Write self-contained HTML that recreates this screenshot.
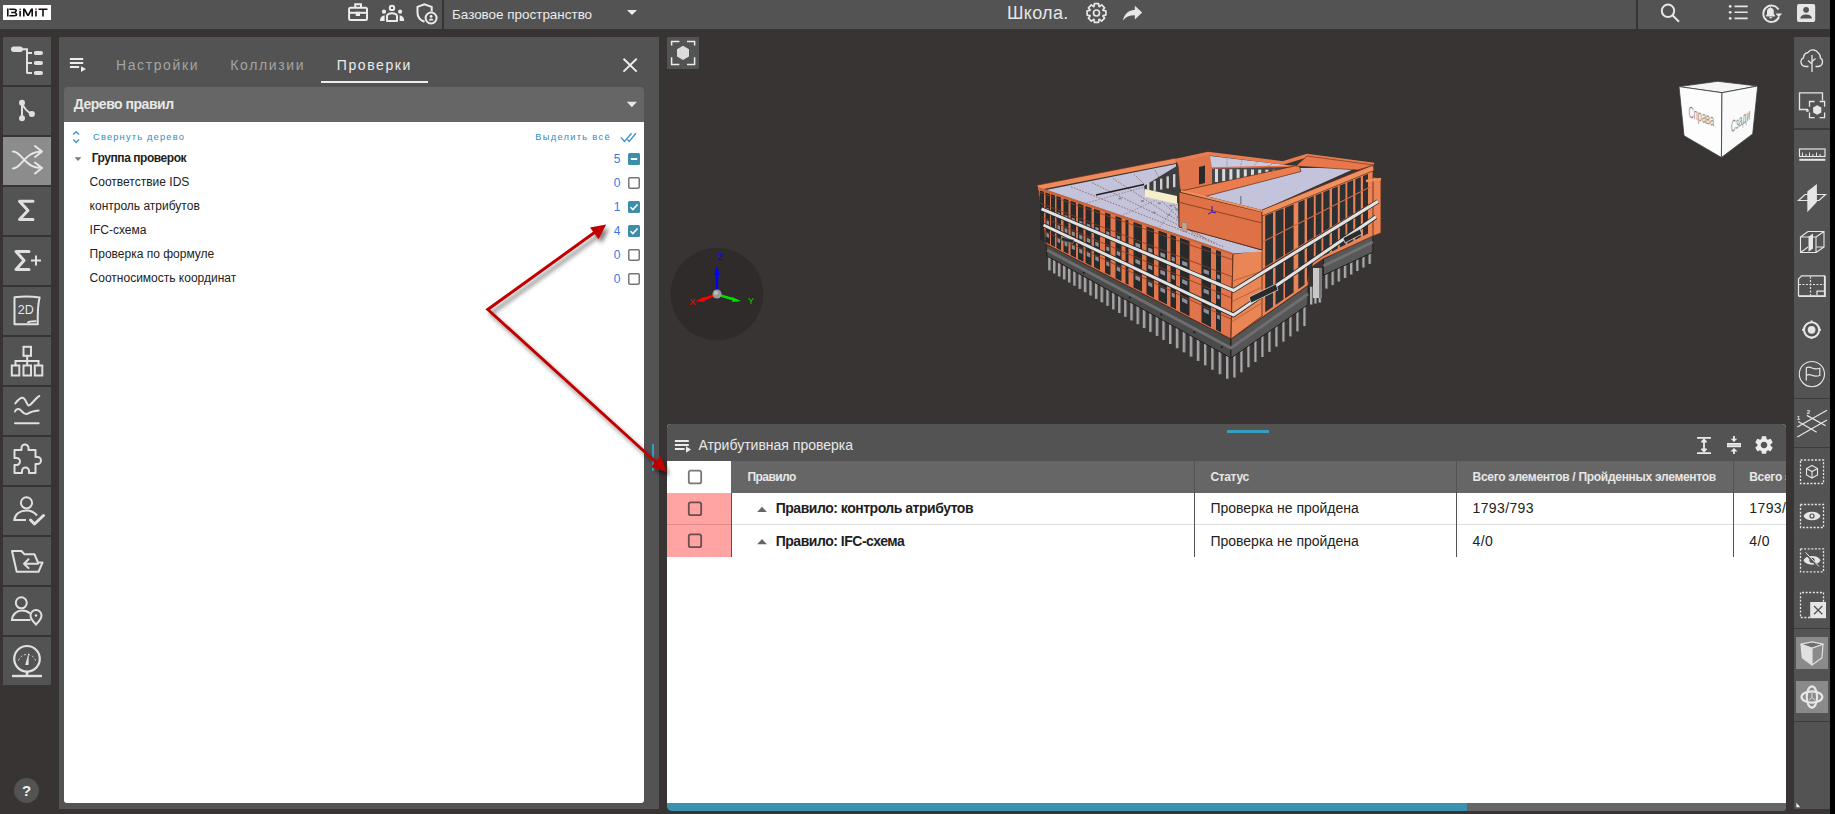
<!DOCTYPE html>
<html><head><meta charset="utf-8">
<style>
*{margin:0;padding:0;box-sizing:border-box}
html,body{width:1835px;height:814px;overflow:hidden;background:#383433;font-family:"Liberation Sans",sans-serif}
.a{position:absolute}
#top{left:0;top:0;width:1830px;height:29px;background:#535353}
#blk{left:1830px;top:0;width:5px;height:814px;background:#000}
.lb{position:absolute;left:3px;width:48px;height:48px;background:#535353}
.lb.on{background:#8c8c8c}
.lb svg{position:absolute;left:0;top:0}
.t{position:absolute;white-space:nowrap;line-height:1}
svg{overflow:visible}
</style></head><body>
<div id="top" class="a"></div>
<div id="blk" class="a"></div>
<!-- logo -->
<div class="a" style="left:3px;top:5px;width:48px;height:15px;background:#fff"></div>
<svg class="a" style="left:3px;top:5px" width="48" height="15" viewBox="0 0 48 15">
<g fill="#111"><rect x="4" y="3.5" width="1.6" height="8"/>
<path d="M6.3 3.5H11Q14 3.5 14 5.6Q14 7.3 12.6 7.5Q14.4 7.8 14.4 9.6Q14.4 11.5 11.2 11.5H6.3V10H11Q12.6 10 12.6 9.4Q12.6 8.3 11 8.3H8.2V6.8H10.8Q12.3 6.8 12.3 5.8Q12.3 5 10.9 5H6.3Z"/>
<rect x="16.3" y="5.8" width="1.6" height="5.7"/>
<path d="M20 11.5V3.5H22L25 9L28 3.5H30V11.5H28.4V6.3L25.8 11H24.2L21.6 6.3V11.5Z"/>
<rect x="32.2" y="5.8" width="1.6" height="5.7"/>
<path d="M35.5 3.5H44.5V5H40.8V11.5H39.2V5H35.5Z"/></g>
<circle cx="17.1" cy="4.3" r="0.8" fill="#111"/><rect x="32.2" y="3.5" width="1.6" height="1.4" fill="#e00"/>
</svg>

<!-- top icons -->
<svg class="a" style="left:340px;top:0" width="100" height="29" viewBox="340 0 100 29">
<g stroke="#ececec" stroke-width="2" fill="none">
<path d="M355.2 7.2V4.3H361V7.2"/><rect x="349.1" y="7.8" width="17.9" height="12.3" rx="1.5"/><path d="M349.1 12.8H367"/>
</g><rect x="355.7" y="11.8" width="4.3" height="4.2" fill="#ececec"/>
<g fill="#ececec"><circle cx="384" cy="11.7" r="2.1"/><circle cx="400.1" cy="11.7" r="2.1"/>
<path d="M380 21Q380 16 384.6 15.2V21Z"/><path d="M404.2 21Q404.2 16 399.6 15.2V21Z"/></g>
<g stroke="#ececec" stroke-width="2" fill="none"><circle cx="392" cy="7.9" r="2.2"/>
<path d="M387 21V16Q387.5 13.2 392 13.2Q396.5 13.2 397 16V21Z" stroke-linejoin="round"/>
<path d="M431.7 11.5V6.9L424.4 4.2L417.5 6.9V13Q417.5 19 424.5 21.8"/><circle cx="431.1" cy="18" r="5.5"/></g>
<circle cx="431.1" cy="16.4" r="1.4" fill="#ececec"/><path d="M428.8 20.6Q429 18.6 431.1 18.6Q433.2 18.6 433.4 20.6Z" fill="#ececec"/>
</svg>
<div class="a" style="left:442px;top:0;width:2px;height:29px;background:#383433"></div>
<div class="t" style="left:452px;top:7.6px;font-size:13.45px;color:#ececec">Базовое пространство</div>
<svg class="a" style="left:626px;top:9px" width="12" height="7" viewBox="0 0 12 7"><path d="M1 1H11L6 6Z" fill="#ececec"/></svg>

<div class="t" style="left:1007px;top:3.8px;font-size:18px;letter-spacing:0.3px;color:#e6e6e6">Школа.</div>
<svg class="a" style="left:1084px;top:1px" width="25" height="25" viewBox="1084 1 25 25">
<path d="M1103.05 10.53 L1105.87 10.90 L1105.87 15.10 L1103.05 15.47 L1102.88 15.89 L1104.61 18.14 L1101.64 21.11 L1099.39 19.38 L1098.97 19.55 L1098.60 22.37 L1094.40 22.37 L1094.03 19.55 L1093.61 19.38 L1091.36 21.11 L1088.39 18.14 L1090.12 15.89 L1089.95 15.47 L1087.13 15.10 L1087.13 10.90 L1089.95 10.53 L1090.12 10.11 L1088.39 7.86 L1091.36 4.89 L1093.61 6.62 L1094.03 6.45 L1094.40 3.63 L1098.60 3.63 L1098.97 6.45 L1099.39 6.62 L1101.64 4.89 L1104.61 7.86 L1102.88 10.11Z" fill="none" stroke="#e6e6e6" stroke-width="1.7" stroke-linejoin="round"/>
<circle cx="1096.5" cy="13" r="3" fill="none" stroke="#e6e6e6" stroke-width="1.7"/>
</svg>
<svg class="a" style="left:1121px;top:2px" width="24" height="22" viewBox="0 0 24 24">
<path fill="#e6e6e6" d="M14 8.5V4l8 7.5-8 7.5v-4.6c-6 0-10.2 1.9-13 5.9 1.2-5.9 4.6-10.9 13-11.8z"/>
</svg>
<div class="a" style="left:1636px;top:0;width:2px;height:29px;background:#383433"></div>
<svg class="a" style="left:1655px;top:0" width="175" height="29" viewBox="1655 0 175 29">
<g stroke="#e6e6e6" stroke-width="2" fill="none"><circle cx="1668" cy="10.8" r="6.2"/><path d="M1672.5 15.3L1679 21.7"/>
<path d="M1734.5 6.4H1747.7M1734.5 12.3H1747.7M1734.5 18.4H1747.7" stroke-width="1.6"/></g>
<g fill="#e6e6e6"><circle cx="1730.2" cy="6.4" r="1.4"/><circle cx="1730.2" cy="12.3" r="1.4"/><circle cx="1730.2" cy="18.4" r="1.4"/></g>
<path d="M1778.5 9.5A8.2 8.2 0 1 0 1779 17" stroke="#e6e6e6" stroke-width="1.9" fill="none"/>
<path d="M1775.5 13.5H1782.2L1778.8 17.3Z" fill="#e6e6e6"/>
<path d="M1766.5 16.5H1775V15.5L1773.8 14V11.2Q1773.8 8.2 1770.8 7.7V7H1770V7.7Q1767 8.2 1767 11.2V14L1766 15.5Z" fill="#e6e6e6"/><rect x="1769.4" y="17" width="2.4" height="1.3" fill="#e6e6e6"/>
<rect x="1797" y="4" width="18.2" height="18" rx="2" fill="#e6e6e6"/>
<circle cx="1806.1" cy="9.8" r="2.9" fill="#535353"/><path d="M1800.2 18.6Q1800.8 14.6 1806.1 14.6Q1811.4 14.6 1812 18.6Z" fill="#535353"/>
</svg>

<div class="lb" style="top:37px"><svg width="48" height="48" viewBox="0 0 48 48"><rect x="8" y="9.5" width="12" height="5.5" rx="2.75" fill="#e0e0e0"/>
<path d="M19 12.2H24V36.5M24 16H29M24 26H29M24 36H29" stroke="#e0e0e0" stroke-width="2" fill="none"/>
<rect x="30.8" y="14" width="9.2" height="4" rx="2" fill="#e0e0e0"/>
<rect x="30.8" y="24" width="9.2" height="4" rx="2" fill="#e0e0e0"/>
<rect x="30.8" y="34" width="9.2" height="4" rx="2" fill="#e0e0e0"/></svg></div>
<div class="lb" style="top:87px"><svg width="48" height="48" viewBox="0 0 48 48"><path d="M19 16V31M19 16Q22 24 28.9 27" stroke="#e0e0e0" stroke-width="2" fill="none"/>
<circle cx="19" cy="15.8" r="3" fill="#e0e0e0"/><circle cx="19" cy="31.3" r="3" fill="#e0e0e0"/><circle cx="28.9" cy="27" r="3" fill="#e0e0e0"/></svg></div>
<div class="lb on" style="top:137px"><svg width="48" height="48" viewBox="0 0 48 48"><path d="M10 14.5C19 14.5 21 31 39 31M10 31.5C19 31.5 21 14.5 39 14.5M32 9L39 14.5L32 20M32 25.5L39 31L32 36.5" stroke="#e6e6e6" stroke-width="2" fill="none" stroke-linecap="round" stroke-linejoin="round"/></svg></div>
<div class="lb" style="top:187px"><svg width="48" height="48" viewBox="0 0 48 48"><path d="M30 14.2H16.5L25 23.5L16.5 32.5H30" stroke="#e0e0e0" stroke-width="3" fill="none" stroke-linecap="round" stroke-linejoin="round"/></svg></div>
<div class="lb" style="top:237px"><svg width="48" height="48" viewBox="0 0 48 48"><path d="M26 14.5H13L21 23.5L13 32.5H26" stroke="#e0e0e0" stroke-width="3" fill="none" stroke-linecap="round" stroke-linejoin="round"/>
<path d="M28 23.5H38M33 18.5V28.5" stroke="#e0e0e0" stroke-width="2" fill="none"/></svg></div>
<div class="lb" style="top:287px"><svg width="48" height="48" viewBox="0 0 48 48"><path d="M11.5 10.2Q24 8.6 36.6 10.4Q34.3 20 34.8 37.2H11.5Z" stroke="#e0e0e0" stroke-width="2" fill="none" stroke-linejoin="round"/>
<path d="M24.5 35.8Q26 34 33.5 34.3" stroke="#e0e0e0" stroke-width="2" fill="none"/>
<text x="22.8" y="26.6" font-family="Liberation Sans" font-size="12.5" fill="#e6e6e6" text-anchor="middle">2D</text></svg></div>
<div class="lb" style="top:337px"><svg width="48" height="48" viewBox="0 0 48 48"><g stroke="#e0e0e0" stroke-width="2" fill="none"><rect x="20.5" y="9.8" width="7.5" height="9"/><path d="M24.2 18.8V28.5M12.5 28.5V24H35.5V28.5"/>
<rect x="8.8" y="28.5" width="7.5" height="10"/><rect x="20.5" y="28.5" width="7.5" height="10"/><rect x="31.8" y="28.5" width="7.5" height="10"/></g></svg></div>
<div class="lb" style="top:387px"><svg width="48" height="48" viewBox="0 0 48 48"><g stroke="#e0e0e0" stroke-width="2" fill="none" stroke-linecap="round"><path d="M12.3 16.4C15 13 17 10.8 19.5 10.8C22.5 10.8 24 18.5 25.6 18.5C28 18.5 33 10.5 36.3 9"/>
<path d="M12 24.5C13 22 15 21.5 17 22.5C19 24 21 28 24 27C27 25 31 23.8 35.6 23.5"/><path d="M12 36.2H35.7"/></g></svg></div>
<div class="lb" style="top:437px"><svg width="48" height="48" viewBox="0 0 48 48"><path d="M11.5 13H18.5V11A3.5 3.5 0 0 1 25.5 11V13H32.5V20H34.5A3.5 3.5 0 0 1 34.5 27H32.5V36H26V34A3.5 3.5 0 0 0 19 34V36H11.5V28H13.5A3.5 3.5 0 0 0 13.5 21H11.5Z" stroke="#e0e0e0" stroke-width="2" fill="none" stroke-linejoin="round"/></svg></div>
<div class="lb" style="top:487px"><svg width="48" height="48" viewBox="0 0 48 48"><g stroke="#e0e0e0" fill="none"><circle cx="23.5" cy="15.8" r="5.6" stroke-width="2"/><path d="M23 33H11.3C12 27 17 23.5 23.5 23.5C28 23.5 31.5 25.5 34 28.5" stroke-width="2"/>
<path d="M27.5 33L31.5 37L40.5 28.5" stroke-width="3" stroke-linecap="round" stroke-linejoin="round"/></g></svg></div>
<div class="lb" style="top:537px"><svg width="48" height="48" viewBox="0 0 48 48"><g stroke="#e0e0e0" stroke-width="2" fill="none" stroke-linejoin="round" stroke-linecap="round"><path d="M9 14H18.5L21.5 17.3H31.5L35 25.5H39.5L35.5 34.8H13.7Z"/><path d="M35 26.7H21.5M25.5 22.3L21 26.7L25.5 31"/></g></svg></div>
<div class="lb" style="top:587px"><svg width="48" height="48" viewBox="0 0 48 48"><g stroke="#e0e0e0" stroke-width="2" fill="none"><circle cx="18.3" cy="15.8" r="5.5"/><path d="M27.5 33H9C9.5 27 14 23.5 19 23.5C22.5 23.5 25 24.5 27 26.5"/>
<path d="M33 37.5C29 33.5 27.5 31 27.5 28.5A5.5 5.5 0 0 1 38.5 28.5C38.5 31 37 33.5 33 37.5Z"/></g><circle cx="33" cy="28.5" r="1.3" fill="#e0e0e0"/></svg></div>
<div class="lb" style="top:637px"><svg width="48" height="48" viewBox="0 0 48 48"><g stroke="#e0e0e0" fill="none"><circle cx="24" cy="21.8" r="12.8" stroke-width="2.2"/><path d="M9 39H39" stroke-width="2.4"/><path d="M24 34.5V39" stroke-width="2.6"/>
<path d="M15.5 23.5A9 9 0 0 1 32.5 23.5" stroke-width="1" stroke-dasharray="2 2"/></g><path d="M22.2 28L25.7 15.2L25.6 28Z" fill="#e0e0e0"/></svg></div>
<!-- left panel -->
<div class="a" style="left:59px;top:37px;width:600px;height:772px;background:#535353"></div>
<svg class="a" style="left:64px;top:50px" width="30" height="30" viewBox="64 50 30 30">
<path d="M69.9 59H83.2M69.9 63H83.2M69.9 67H79.1" stroke="#ececec" stroke-width="2"/><path d="M81 66.2L86 69.1L81 72.1Z" fill="#ececec"/>
</svg>
<div class="t" style="left:116px;top:57.6px;font-size:14px;letter-spacing:1.6px;color:#a3a3a3">Настройки</div>
<div class="t" style="left:230.3px;top:57.6px;font-size:14px;letter-spacing:1.62px;color:#a3a3a3">Коллизии</div>
<div class="t" style="left:336.8px;top:57.6px;font-size:14px;letter-spacing:1.58px;color:#ececec">Проверки</div>
<div class="a" style="left:321px;top:81px;width:107px;height:2px;background:#ececec"></div>
<svg class="a" style="left:620px;top:56px" width="20" height="20" viewBox="620 56 20 20">
<path d="M623.5 58.8L636.7 71.6M636.7 58.8L623.5 71.6" stroke="#ececec" stroke-width="2"/>
</svg>
<div class="a" style="left:64px;top:87px;width:580px;height:35px;background:#666;border-radius:4px 4px 0 0"></div>
<div class="t" style="left:73.8px;top:97.1px;font-size:14px;font-weight:bold;letter-spacing:-0.48px;color:#e8e8e8">Дерево правил</div>
<svg class="a" style="left:626px;top:101px" width="12" height="7" viewBox="0 0 12 7"><path d="M0.7 0.7H11L5.85 6.2Z" fill="#e8e8e8"/></svg>
<div class="a" style="left:64px;top:122px;width:580px;height:681px;background:#fff;border-radius:0 0 3px 3px"></div>
<svg class="a" style="left:70px;top:128px" width="12" height="18" viewBox="70 128 12 18">
<path d="M73.3 134.6L76.2 131.7L79 134.6M73.3 139.6L76.2 142.5L79 139.6" stroke="#3d97c6" stroke-width="1.4" fill="none"/>
</svg>
<div class="t" style="left:93px;top:133.2px;font-size:9.3px;letter-spacing:1.18px;color:#2f8ec0">Свернуть дерево</div>
<div class="t" style="left:535.2px;top:133.3px;font-size:9.3px;letter-spacing:1.3px;color:#2f8ec0">Выделить всё</div>
<svg class="a" style="left:618px;top:130px" width="20" height="15" viewBox="618 130 20 15">
<path d="M621 137.5L624.5 141.5L631.5 133.3M627.5 139.5L629.2 141.5L636 133.3" stroke="#3d97c6" stroke-width="1.4" fill="none"/>
</svg>
<svg class="a" style="left:74px;top:156px" width="8" height="6" viewBox="0 0 8 6"><path d="M0.6 1.2H7.4L4 4.9Z" fill="#777"/></svg>
<div class="t" style="left:91.7px;top:151.8px;font-size:12px;font-weight:bold;letter-spacing:-0.45px;color:#1e1e1e">Группа проверок</div>
<div class="t" style="left:89.6px;top:175.5px;font-size:12px;color:#222">Соответствие IDS</div>
<div class="t" style="left:89.6px;top:199.5px;font-size:12px;color:#222">контроль атрибутов</div>
<div class="t" style="left:89.6px;top:223.5px;font-size:12px;color:#222">IFC-схема</div>
<div class="t" style="left:89.6px;top:247.5px;font-size:12px;color:#222">Проверка по формуле</div>
<div class="t" style="left:89.6px;top:271.5px;font-size:12px;color:#222">Соотносимость координат</div>
<div class="t" style="left:613.8px;top:152.5px;font-size:12px;color:#3b78e7">5</div>
<div class="t" style="left:613.8px;top:176.5px;font-size:12px;color:#3b78e7">0</div>
<div class="t" style="left:613.8px;top:200.5px;font-size:12px;color:#3b78e7">1</div>
<div class="t" style="left:613.8px;top:224.5px;font-size:12px;color:#3b78e7">4</div>
<div class="t" style="left:613.8px;top:248.5px;font-size:12px;color:#3b78e7">0</div>
<div class="t" style="left:613.8px;top:272.5px;font-size:12px;color:#3b78e7">0</div>
<svg class="a" style="left:626px;top:150px" width="16" height="140" viewBox="626 150 16 140">
<rect x="628" y="153" width="12" height="12" rx="1.5" fill="#3d8fa9"/><path d="M630.8 159H637.2" stroke="#fff" stroke-width="2"/>
<rect x="628.75" y="177.75" width="10.5" height="10.5" rx="1.2" fill="#fff" stroke="#767676" stroke-width="1.5"/>
<rect x="628" y="201" width="12" height="12" rx="1.5" fill="#3d8fa9"/><path d="M630.5 207.2L632.9 209.6L637.5 204.5" stroke="#fff" stroke-width="1.6" fill="none"/>
<rect x="628" y="225" width="12" height="12" rx="1.5" fill="#3d8fa9"/><path d="M630.5 231.2L632.9 233.6L637.5 228.5" stroke="#fff" stroke-width="1.6" fill="none"/>
<rect x="628.75" y="249.75" width="10.5" height="10.5" rx="1.2" fill="#fff" stroke="#767676" stroke-width="1.5"/>
<rect x="628.75" y="273.75" width="10.5" height="10.5" rx="1.2" fill="#fff" stroke="#767676" stroke-width="1.5"/>
</svg>

<!-- viewer button -->
<div class="a" style="left:667px;top:37px;width:32px;height:32px;background:#535353"></div>
<svg class="a" style="left:667px;top:37px" width="32" height="32" viewBox="667 37 32 32">
<path d="M671.6 45.6V41.6H679.4M687 41.6H694.6V45.6M694.6 57.2V64.6H687M679.4 64.6H671.6V57.2" stroke="#ececec" stroke-width="1.5" fill="none"/>
<path d="M683 45.8L689 49.3V56.5L683 60L677 56.5V49.3Z" fill="#dcdcdc"/>
</svg>
<!-- axis gizmo -->
<svg class="a" style="left:667px;top:244px" width="100" height="100" viewBox="667 244 100 100">
<circle cx="717" cy="294" r="46.3" fill="#2f2b2a"/>
<path d="M717 292V272" stroke="#0000ff" stroke-width="2.5"/><path d="M714.3 275L717 265.5L719.7 275Z" fill="#0000ff"/>
<path d="M715 295L702 300" stroke="#ff0000" stroke-width="2.5"/><path d="M703.5 297L695.7 301.3L704.8 302Z" fill="#ff0000"/>
<path d="M719 295L734 299.5" stroke="#00e000" stroke-width="2.5"/><path d="M732 297L741 301L732.5 302Z" fill="#00e000"/>
<circle cx="717" cy="294" r="4.5" fill="#9a9a9a"/><circle cx="716" cy="293" r="2" fill="#bdbdbd"/>
<text x="720" y="260" font-family="Liberation Sans" font-size="9" fill="#0000ff" text-anchor="middle">Z</text>
<text x="692.5" y="305" font-family="Liberation Sans" font-size="9" fill="#ff0000" text-anchor="middle">X</text>
<text x="751" y="304" font-family="Liberation Sans" font-size="9" fill="#00cc00" text-anchor="middle">Y</text>
</svg>
<!-- view cube -->
<svg class="a" style="left:1670px;top:75px" width="100" height="90" viewBox="1670 75 100 90">
<path d="M1679 86.6L1717.7 81.3L1757.7 86L1722 92.7Z" fill="#f4f4f4" stroke="#3a3a3a" stroke-width="0.8"/>
<path d="M1679 86.6L1722 92.7L1721.4 157.5L1684 135.7Z" fill="#fdfdfd" stroke="#3a3a3a" stroke-width="0.8"/>
<path d="M1722 92.7L1757.7 86L1752.7 133.9L1721.4 157.5Z" fill="#fafafa" stroke="#3a3a3a" stroke-width="0.8"/>
<text font-family="Liberation Sans" font-size="9.5" fill="#8a8a8a" transform="translate(1688.5 117) skewY(20) scale(0.78 1.7)">Справа</text>
<text font-family="Liberation Sans" font-size="9.5" fill="#8a8a8a" transform="translate(1731 133) skewY(-36) scale(0.7 1.7)">Сзади</text>
</svg>

<!-- building -->
<svg class="a" style="left:1020px;top:140px" width="380" height="250" viewBox="1020 140 380 250"><rect x="1048.2" y="255.3" width="2.6" height="15.1" fill="#a4a4a4"/>
<rect x="1050.3" y="255.3" width="0.9" height="15.1" fill="#6a6a6a"/>
<rect x="1053.0" y="258.0" width="2.6" height="15.4" fill="#a4a4a4"/>
<rect x="1055.1" y="258.0" width="0.9" height="15.4" fill="#6a6a6a"/>
<rect x="1057.9" y="260.7" width="2.6" height="15.7" fill="#a4a4a4"/>
<rect x="1060.0" y="260.7" width="0.9" height="15.7" fill="#6a6a6a"/>
<rect x="1062.9" y="263.5" width="2.6" height="15.9" fill="#a4a4a4"/>
<rect x="1065.0" y="263.5" width="0.9" height="15.9" fill="#6a6a6a"/>
<rect x="1068.0" y="266.3" width="2.6" height="16.2" fill="#a4a4a4"/>
<rect x="1070.1" y="266.3" width="0.9" height="16.2" fill="#6a6a6a"/>
<rect x="1073.2" y="269.2" width="2.6" height="16.5" fill="#a4a4a4"/>
<rect x="1075.3" y="269.2" width="0.9" height="16.5" fill="#6a6a6a"/>
<rect x="1078.5" y="272.1" width="2.6" height="16.8" fill="#a4a4a4"/>
<rect x="1080.6" y="272.1" width="0.9" height="16.8" fill="#6a6a6a"/>
<rect x="1083.8" y="275.1" width="2.6" height="17.1" fill="#a4a4a4"/>
<rect x="1085.9" y="275.1" width="0.9" height="17.1" fill="#6a6a6a"/>
<rect x="1089.3" y="278.1" width="2.6" height="17.4" fill="#a4a4a4"/>
<rect x="1091.4" y="278.1" width="0.9" height="17.4" fill="#6a6a6a"/>
<rect x="1094.9" y="281.2" width="2.6" height="17.7" fill="#a4a4a4"/>
<rect x="1097.0" y="281.2" width="0.9" height="17.7" fill="#6a6a6a"/>
<rect x="1100.5" y="284.3" width="2.6" height="18.0" fill="#a4a4a4"/>
<rect x="1102.6" y="284.3" width="0.9" height="18.0" fill="#6a6a6a"/>
<rect x="1106.3" y="287.5" width="2.6" height="18.3" fill="#a4a4a4"/>
<rect x="1108.4" y="287.5" width="0.9" height="18.3" fill="#6a6a6a"/>
<rect x="1112.1" y="290.8" width="2.6" height="18.6" fill="#a4a4a4"/>
<rect x="1114.2" y="290.8" width="0.9" height="18.6" fill="#6a6a6a"/>
<rect x="1118.1" y="294.1" width="2.6" height="18.9" fill="#a4a4a4"/>
<rect x="1120.2" y="294.1" width="0.9" height="18.9" fill="#6a6a6a"/>
<rect x="1124.1" y="297.4" width="2.6" height="19.3" fill="#a4a4a4"/>
<rect x="1126.2" y="297.4" width="0.9" height="19.3" fill="#6a6a6a"/>
<rect x="1130.3" y="300.8" width="2.6" height="19.6" fill="#a4a4a4"/>
<rect x="1132.4" y="300.8" width="0.9" height="19.6" fill="#6a6a6a"/>
<rect x="1136.5" y="304.3" width="2.6" height="19.9" fill="#a4a4a4"/>
<rect x="1138.6" y="304.3" width="0.9" height="19.9" fill="#6a6a6a"/>
<rect x="1142.8" y="307.8" width="2.6" height="20.3" fill="#a4a4a4"/>
<rect x="1144.9" y="307.8" width="0.9" height="20.3" fill="#6a6a6a"/>
<rect x="1149.2" y="311.3" width="2.6" height="20.6" fill="#a4a4a4"/>
<rect x="1151.3" y="311.3" width="0.9" height="20.6" fill="#6a6a6a"/>
<rect x="1155.7" y="314.9" width="2.6" height="21.0" fill="#a4a4a4"/>
<rect x="1157.8" y="314.9" width="0.9" height="21.0" fill="#6a6a6a"/>
<rect x="1162.3" y="318.6" width="2.6" height="21.3" fill="#a4a4a4"/>
<rect x="1164.4" y="318.6" width="0.9" height="21.3" fill="#6a6a6a"/>
<rect x="1169.0" y="322.3" width="2.6" height="21.7" fill="#a4a4a4"/>
<rect x="1171.1" y="322.3" width="0.9" height="21.7" fill="#6a6a6a"/>
<rect x="1175.8" y="326.1" width="2.6" height="22.1" fill="#a4a4a4"/>
<rect x="1177.9" y="326.1" width="0.9" height="22.1" fill="#6a6a6a"/>
<rect x="1182.7" y="329.9" width="2.6" height="22.4" fill="#a4a4a4"/>
<rect x="1184.8" y="329.9" width="0.9" height="22.4" fill="#6a6a6a"/>
<rect x="1189.7" y="333.8" width="2.6" height="22.8" fill="#a4a4a4"/>
<rect x="1191.8" y="333.8" width="0.9" height="22.8" fill="#6a6a6a"/>
<rect x="1196.8" y="337.7" width="2.6" height="23.2" fill="#a4a4a4"/>
<rect x="1198.9" y="337.7" width="0.9" height="23.2" fill="#6a6a6a"/>
<rect x="1204.0" y="341.7" width="2.6" height="23.6" fill="#a4a4a4"/>
<rect x="1206.1" y="341.7" width="0.9" height="23.6" fill="#6a6a6a"/>
<rect x="1211.2" y="345.7" width="2.6" height="24.0" fill="#a4a4a4"/>
<rect x="1213.3" y="345.7" width="0.9" height="24.0" fill="#6a6a6a"/>
<rect x="1218.6" y="349.8" width="2.6" height="24.4" fill="#a4a4a4"/>
<rect x="1220.7" y="349.8" width="0.9" height="24.4" fill="#6a6a6a"/>
<rect x="1226.0" y="353.9" width="2.6" height="24.8" fill="#a4a4a4"/>
<rect x="1228.1" y="353.9" width="0.9" height="24.8" fill="#6a6a6a"/>
<rect x="1233.3" y="353.6" width="2.4" height="23.9" fill="#a8a8a8"/>
<rect x="1235.3" y="353.6" width="0.8" height="23.9" fill="#6a6a6a"/>
<rect x="1240.3" y="348.7" width="2.4" height="23.6" fill="#a8a8a8"/>
<rect x="1242.3" y="348.7" width="0.8" height="23.6" fill="#6a6a6a"/>
<rect x="1247.3" y="343.9" width="2.4" height="23.3" fill="#a8a8a8"/>
<rect x="1249.3" y="343.9" width="0.8" height="23.3" fill="#6a6a6a"/>
<rect x="1254.3" y="339.0" width="2.4" height="23.0" fill="#a8a8a8"/>
<rect x="1256.3" y="339.0" width="0.8" height="23.0" fill="#6a6a6a"/>
<rect x="1261.3" y="334.2" width="2.4" height="22.8" fill="#a8a8a8"/>
<rect x="1263.3" y="334.2" width="0.8" height="22.8" fill="#6a6a6a"/>
<rect x="1268.3" y="329.3" width="2.4" height="22.5" fill="#a8a8a8"/>
<rect x="1270.3" y="329.3" width="0.8" height="22.5" fill="#6a6a6a"/>
<rect x="1275.3" y="324.4" width="2.4" height="22.2" fill="#a8a8a8"/>
<rect x="1277.3" y="324.4" width="0.8" height="22.2" fill="#6a6a6a"/>
<rect x="1282.3" y="319.6" width="2.4" height="22.0" fill="#a8a8a8"/>
<rect x="1284.3" y="319.6" width="0.8" height="22.0" fill="#6a6a6a"/>
<rect x="1289.3" y="314.7" width="2.4" height="21.7" fill="#a8a8a8"/>
<rect x="1291.3" y="314.7" width="0.8" height="21.7" fill="#6a6a6a"/>
<rect x="1296.3" y="309.9" width="2.4" height="21.4" fill="#a8a8a8"/>
<rect x="1298.3" y="309.9" width="0.8" height="21.4" fill="#6a6a6a"/>
<rect x="1303.3" y="305.0" width="2.4" height="21.1" fill="#a8a8a8"/>
<rect x="1305.3" y="305.0" width="0.8" height="21.1" fill="#6a6a6a"/>
<rect x="1310.0" y="286.7" width="2.4" height="17.8" fill="#b0b0b0"/>
<rect x="1312.0" y="286.7" width="0.8" height="17.8" fill="#6a6a6a"/>
<rect x="1314.3" y="284.0" width="2.4" height="19.5" fill="#b0b0b0"/>
<rect x="1316.3" y="284.0" width="0.8" height="19.5" fill="#6a6a6a"/>
<rect x="1318.6" y="281.3" width="2.4" height="21.2" fill="#b0b0b0"/>
<rect x="1320.6" y="281.3" width="0.8" height="21.2" fill="#6a6a6a"/>
<rect x="1325.3" y="271.9" width="2.4" height="16.7" fill="#a8a8a8"/>
<rect x="1327.3" y="271.9" width="0.8" height="16.7" fill="#6a6a6a"/>
<rect x="1331.5" y="269.0" width="2.4" height="16.1" fill="#a8a8a8"/>
<rect x="1333.5" y="269.0" width="0.8" height="16.1" fill="#6a6a6a"/>
<rect x="1337.6" y="266.1" width="2.4" height="15.4" fill="#a8a8a8"/>
<rect x="1339.6" y="266.1" width="0.8" height="15.4" fill="#6a6a6a"/>
<rect x="1343.8" y="263.2" width="2.4" height="14.8" fill="#a8a8a8"/>
<rect x="1345.8" y="263.2" width="0.8" height="14.8" fill="#6a6a6a"/>
<rect x="1350.0" y="260.3" width="2.4" height="14.2" fill="#a8a8a8"/>
<rect x="1352.0" y="260.3" width="0.8" height="14.2" fill="#6a6a6a"/>
<rect x="1356.2" y="257.4" width="2.4" height="13.6" fill="#a8a8a8"/>
<rect x="1358.2" y="257.4" width="0.8" height="13.6" fill="#6a6a6a"/>
<rect x="1362.3" y="254.6" width="2.4" height="12.9" fill="#a8a8a8"/>
<rect x="1364.3" y="254.6" width="0.8" height="12.9" fill="#6a6a6a"/>
<rect x="1368.5" y="251.6" width="2.4" height="12.3" fill="#a8a8a8"/>
<rect x="1370.5" y="251.6" width="0.8" height="12.3" fill="#6a6a6a"/>
<rect x="1313" y="268" width="6" height="30" fill="#c8c8c8"/>
<rect x="1319" y="268" width="3" height="30" fill="#7a7a7a"/>
<polygon points="1046.0,244.0 1231.0,339.0 1231.0,358.0 1047.0,256.0" fill="#4a4a4a" stroke="#1e1e1e" stroke-width="1"/>
<polygon points="1231.0,339.0 1308.0,285.5 1308.0,304.6 1231.0,358.0" fill="#565656" stroke="#1e1e1e" stroke-width="1"/>
<polygon points="1323.4,259.2 1372.8,234.0 1372.8,252.2 1323.4,275.4" fill="#585858" stroke="#1e1e1e" stroke-width="1"/>
<polyline points="1047.0,250.0 1231.0,348.0 1308.0,294.0" fill="none" stroke="#6e6e6e" stroke-width="3"/>
<polyline points="1323.4,266.0 1372.8,242.0" fill="none" stroke="#707070" stroke-width="3"/>
<circle cx="1083.8" cy="272.8" r="1" fill="#1a1a1a"/>
<circle cx="1129.8" cy="297.6" r="1" fill="#1a1a1a"/>
<circle cx="1161.1" cy="314.4" r="1" fill="#1a1a1a"/>
<circle cx="1194.2" cy="332.2" r="1" fill="#1a1a1a"/>
<circle cx="1221.8" cy="347.1" r="1" fill="#1a1a1a"/>
<polygon points="1038.0,188.0 1233.0,254.0 1231.0,339.0 1046.0,244.0" fill="#e0744a" stroke="#5a2a18" stroke-width="0.8"/>
<polygon points="1040.0,190.5 1044.0,191.8 1044.0,241.5 1040.0,239.4" fill="#27292b"/>
<polygon points="1045.5,192.3 1050.0,193.9 1050.0,244.6 1045.5,242.2" fill="#27292b"/>
<polygon points="1046.5,207.7 1049.0,208.7 1049.0,212.7 1046.5,211.7" fill="#b8bcc4" opacity="0.7"/>
<polygon points="1046.5,220.2 1049.0,221.3 1049.0,225.3 1046.5,224.2" fill="#b8bcc4" opacity="0.7"/>
<polygon points="1046.5,232.7 1049.0,233.9 1049.0,237.9 1046.5,236.7" fill="#b8bcc4" opacity="0.7"/>
<polygon points="1051.0,194.2 1055.0,195.5 1055.0,247.1 1051.0,245.1" fill="#27292b"/>
<polygon points="1056.5,196.1 1061.0,197.6 1061.0,250.2 1056.5,247.9" fill="#27292b"/>
<polygon points="1057.5,212.0 1060.0,213.0 1060.0,217.0 1057.5,216.0" fill="#b8bcc4" opacity="0.7"/>
<polygon points="1057.5,225.0 1060.0,226.1 1060.0,230.1 1057.5,229.0" fill="#b8bcc4" opacity="0.7"/>
<polygon points="1057.5,238.0 1060.0,239.2 1060.0,243.2 1057.5,242.0" fill="#b8bcc4" opacity="0.7"/>
<polygon points="1063.5,198.4 1068.5,200.1 1068.5,254.1 1063.5,251.5" fill="#27292b"/>
<polygon points="1064.6,214.8 1067.4,215.9 1067.4,219.9 1064.6,218.8" fill="#b8bcc4" opacity="0.7"/>
<polygon points="1064.6,228.1 1067.4,229.3 1067.4,233.3 1064.6,232.1" fill="#b8bcc4" opacity="0.7"/>
<polygon points="1064.6,241.4 1067.4,242.7 1067.4,246.7 1064.6,245.4" fill="#b8bcc4" opacity="0.7"/>
<polygon points="1070.5,200.8 1076.0,202.6 1076.0,257.9 1070.5,255.1" fill="#27292b"/>
<polygon points="1071.7,217.5 1074.8,218.7 1074.8,222.7 1071.7,221.5" fill="#b8bcc4" opacity="0.7"/>
<polygon points="1071.7,231.2 1074.8,232.5 1074.8,236.5 1071.7,235.2" fill="#b8bcc4" opacity="0.7"/>
<polygon points="1071.7,244.8 1074.8,246.3 1074.8,250.3 1071.7,248.8" fill="#b8bcc4" opacity="0.7"/>
<polygon points="1078.0,203.3 1083.5,205.2 1083.5,261.8 1078.0,258.9" fill="#27292b"/>
<polygon points="1079.2,220.5 1082.3,221.7 1082.3,225.7 1079.2,224.5" fill="#b8bcc4" opacity="0.7"/>
<polygon points="1079.2,234.4 1082.3,235.8 1082.3,239.8 1079.2,238.4" fill="#b8bcc4" opacity="0.7"/>
<polygon points="1079.2,248.4 1082.3,249.9 1082.3,253.9 1079.2,252.4" fill="#b8bcc4" opacity="0.7"/>
<polygon points="1085.5,205.9 1091.5,207.9 1091.5,265.9 1085.5,262.8" fill="#27292b"/>
<polygon points="1086.8,223.4 1090.2,224.8 1090.2,228.8 1086.8,227.4" fill="#b8bcc4" opacity="0.7"/>
<polygon points="1086.8,237.7 1090.2,239.2 1090.2,243.2 1086.8,241.7" fill="#b8bcc4" opacity="0.7"/>
<polygon points="1086.8,252.0 1090.2,253.6 1090.2,257.6 1086.8,256.0" fill="#b8bcc4" opacity="0.7"/>
<polygon points="1094.0,208.7 1100.0,210.8 1100.0,270.2 1094.0,267.1" fill="#27292b"/>
<polygon points="1095.3,226.8 1098.7,228.1 1098.7,232.1 1095.3,230.8" fill="#b8bcc4" opacity="0.7"/>
<polygon points="1095.3,241.4 1098.7,242.9 1098.7,246.9 1095.3,245.4" fill="#b8bcc4" opacity="0.7"/>
<polygon points="1095.3,256.1 1098.7,257.7 1098.7,261.7 1095.3,260.1" fill="#b8bcc4" opacity="0.7"/>
<polygon points="1105.0,212.4 1110.5,214.3 1110.5,275.6 1105.0,272.8" fill="#27292b"/>
<polygon points="1106.2,231.0 1109.3,232.2 1109.3,236.2 1106.2,235.0" fill="#b8bcc4" opacity="0.7"/>
<polygon points="1106.2,246.2 1109.3,247.5 1109.3,251.5 1106.2,250.2" fill="#b8bcc4" opacity="0.7"/>
<polygon points="1106.2,261.3 1109.3,262.8 1109.3,266.8 1106.2,265.3" fill="#b8bcc4" opacity="0.7"/>
<polygon points="1115.5,216.0 1121.5,218.0 1121.5,281.3 1115.5,278.2" fill="#27292b"/>
<polygon points="1116.8,235.2 1120.2,236.5 1120.2,240.5 1116.8,239.2" fill="#b8bcc4" opacity="0.7"/>
<polygon points="1116.8,250.8 1120.2,252.2 1120.2,256.2 1116.8,254.8" fill="#b8bcc4" opacity="0.7"/>
<polygon points="1116.8,266.4 1120.2,268.0 1120.2,272.0 1116.8,270.4" fill="#b8bcc4" opacity="0.7"/>
<polygon points="1125.5,219.4 1128.5,220.4 1128.5,284.9 1125.5,283.3" fill="#27292b"/>
<polygon points="1133.5,222.1 1142.0,225.0 1142.0,291.8 1133.5,287.4" fill="#27292b"/>
<polygon points="1135.4,242.4 1140.1,244.3 1140.1,248.3 1135.4,246.4" fill="#b8bcc4" opacity="0.7"/>
<polygon points="1135.4,258.8 1140.1,260.9 1140.1,264.9 1135.4,262.8" fill="#b8bcc4" opacity="0.7"/>
<polygon points="1135.4,275.3 1140.1,277.5 1140.1,281.5 1135.4,279.3" fill="#b8bcc4" opacity="0.7"/>
<polygon points="1146.5,226.5 1154.0,229.0 1154.0,298.0 1146.5,294.1" fill="#27292b"/>
<polygon points="1148.2,247.4 1152.3,249.0 1152.3,253.0 1148.2,251.4" fill="#b8bcc4" opacity="0.7"/>
<polygon points="1148.2,264.4 1152.3,266.2 1152.3,270.2 1148.2,268.4" fill="#b8bcc4" opacity="0.7"/>
<polygon points="1148.2,281.4 1152.3,283.4 1152.3,287.4 1148.2,285.4" fill="#b8bcc4" opacity="0.7"/>
<polygon points="1158.5,230.5 1167.0,233.4 1167.0,304.6 1158.5,300.3" fill="#27292b"/>
<polygon points="1160.4,252.2 1165.1,254.0 1165.1,258.0 1160.4,256.2" fill="#b8bcc4" opacity="0.7"/>
<polygon points="1160.4,269.7 1165.1,271.8 1165.1,275.8 1160.4,273.7" fill="#b8bcc4" opacity="0.7"/>
<polygon points="1160.4,287.2 1165.1,289.5 1165.1,293.5 1160.4,291.2" fill="#b8bcc4" opacity="0.7"/>
<polygon points="1170.5,234.6 1176.0,236.4 1176.0,309.3 1170.5,306.4" fill="#27292b"/>
<polygon points="1171.7,256.6 1174.8,257.8 1174.8,261.8 1171.7,260.6" fill="#b8bcc4" opacity="0.7"/>
<polygon points="1171.7,274.6 1174.8,276.0 1174.8,280.0 1171.7,278.6" fill="#b8bcc4" opacity="0.7"/>
<polygon points="1171.7,292.6 1174.8,294.1 1174.8,298.1 1171.7,296.6" fill="#b8bcc4" opacity="0.7"/>
<polygon points="1180.0,237.8 1189.5,241.0 1189.5,316.2 1180.0,311.3" fill="#27292b"/>
<polygon points="1182.1,260.7 1187.4,262.7 1187.4,266.7 1182.1,264.7" fill="#b8bcc4" opacity="0.7"/>
<polygon points="1182.1,279.1 1187.4,281.4 1187.4,285.4 1182.1,283.1" fill="#b8bcc4" opacity="0.7"/>
<polygon points="1182.1,297.6 1187.4,300.2 1187.4,304.2 1182.1,301.6" fill="#b8bcc4" opacity="0.7"/>
<polygon points="1201.5,245.1 1211.0,248.3 1211.0,327.2 1201.5,322.3" fill="#27292b"/>
<polygon points="1203.6,269.1 1208.9,271.1 1208.9,275.1 1203.6,273.1" fill="#b8bcc4" opacity="0.7"/>
<polygon points="1203.6,288.5 1208.9,290.8 1208.9,294.8 1203.6,292.5" fill="#b8bcc4" opacity="0.7"/>
<polygon points="1203.6,307.9 1208.9,310.4 1208.9,314.4 1203.6,311.9" fill="#b8bcc4" opacity="0.7"/>
<polygon points="1216.0,250.0 1221.0,251.7 1221.0,332.4 1216.0,329.8" fill="#27292b"/>
<polygon points="1217.1,274.3 1219.9,275.4 1219.9,279.4 1217.1,278.3" fill="#b8bcc4" opacity="0.7"/>
<polygon points="1217.1,294.3 1219.9,295.6 1219.9,299.6 1217.1,298.3" fill="#b8bcc4" opacity="0.7"/>
<polygon points="1217.1,314.4 1219.9,315.7 1219.9,319.7 1217.1,318.4" fill="#b8bcc4" opacity="0.7"/>
<line x1="1038.6" y1="191.9" x2="1232.9" y2="259.9" stroke="#8a3e22" stroke-width="0.8"/>
<line x1="1040.2" y1="203.1" x2="1232.5" y2="276.9" stroke="#8a3e22" stroke-width="0.8"/>
<line x1="1042.2" y1="217.1" x2="1232.0" y2="298.2" stroke="#8a3e22" stroke-width="0.8"/>
<line x1="1044.2" y1="231.1" x2="1231.5" y2="319.4" stroke="#8a3e22" stroke-width="0.8"/>
<polygon points="1233.0,254.0 1262.0,250.0 1262.0,210.0 1373.0,165.0 1373.0,177.0 1381.0,179.0 1381.0,233.0 1373.0,236.0 1323.0,259.0 1310.0,268.0 1308.0,285.5 1231.0,339.0" fill="#ea8456" stroke="#5a2a18" stroke-width="0.8"/>
<polygon points="1265.2,215.7 1273.0,212.5 1273.0,306.8 1265.2,312.2" fill="#2c3033"/>
<polygon points="1275.5,211.5 1283.5,208.3 1283.5,299.5 1275.5,305.1" fill="#2c3033"/>
<polygon points="1285.0,207.7 1293.6,204.2 1293.6,292.5 1285.0,298.5" fill="#2c3033"/>
<polygon points="1298.3,202.3 1304.6,199.7 1304.6,284.8 1298.3,289.2" fill="#2c3033"/>
<polygon points="1307.0,198.8 1313.8,196.0 1313.8,260.6 1307.0,283.2" fill="#2c3033"/>
<polygon points="1315.7,195.3 1321.5,192.9 1321.5,256.8 1315.7,259.6" fill="#2c3033"/>
<polygon points="1323.3,192.2 1329.6,189.6 1329.6,252.7 1323.3,255.9" fill="#2c3033"/>
<polygon points="1332.0,188.7 1337.8,186.3 1337.8,248.6 1332.0,251.5" fill="#2c3033"/>
<polygon points="1339.8,185.5 1345.5,183.2 1345.5,244.8 1339.8,247.6" fill="#2c3033"/>
<polygon points="1347.3,182.5 1353.2,180.1 1353.2,240.9 1347.3,243.9" fill="#2c3033"/>
<polygon points="1355.3,179.2 1360.8,177.0 1360.8,237.1 1355.3,239.9" fill="#2c3033"/>
<polygon points="1363.0,176.1 1368.0,174.1 1368.0,233.5 1363.0,236.0" fill="#2c3033"/>
<line x1="1262.0" y1="242.2" x2="1370.0" y2="187.0" stroke="#c86a40" stroke-width="1.1"/>
<line x1="1262.0" y1="269.1" x2="1370.0" y2="204.3" stroke="#c86a40" stroke-width="1.1"/>
<line x1="1262.0" y1="296.0" x2="1370.0" y2="221.7" stroke="#c86a40" stroke-width="1.1"/>
<polygon points="1233.0,254.0 1262.0,250.0 1262.0,316.0 1231.0,339.0" fill="#ea8656" stroke="#5a2a18" stroke-width="0.8"/>
<line x1="1232.4" y1="281.2" x2="1262.0" y2="271.1" stroke="#b05a34" stroke-width="0.8"/>
<line x1="1231.9" y1="301.6" x2="1262.0" y2="287.0" stroke="#b05a34" stroke-width="0.8"/>
<line x1="1231.4" y1="322.0" x2="1262.0" y2="302.8" stroke="#b05a34" stroke-width="0.8"/>
<polyline points="1373.0,177.0 1373.0,236.0" fill="none" stroke="#7a3418" stroke-width="1"/>
<polyline points="1366.0,181.0 1381.0,179.0" fill="none" stroke="#f0905e" stroke-width="2.5"/>
<polygon points="1046.0,190.0 1176.0,164.0 1179.0,227.0 1262.0,250.5 1262.0,251.5 1233.0,253.5" fill="#c3c4db"/>
<polyline points="1038.0,187.5 1176.0,160.5" fill="none" stroke="#f08a5a" stroke-width="5"/>
<polyline points="1038.0,187.5 1176.0,160.5" fill="none" stroke="#5a2a18" stroke-width="0.7" transform="translate(0,-2.5)"/>
<polyline points="1038.0,188.0 1233.0,254.0" fill="none" stroke="#c8643c" stroke-width="2"/>
<line x1="1071.0" y1="186.8" x2="1224.0" y2="247.0" stroke="#8e5a50" stroke-width="0.8" stroke-dasharray="1.6 1.4"/>
<line x1="1092.0" y1="182.7" x2="1215.0" y2="243.0" stroke="#8e5a50" stroke-width="0.8" stroke-dasharray="1.6 1.4"/>
<line x1="1113.0" y1="178.5" x2="1206.0" y2="239.0" stroke="#8e5a50" stroke-width="0.8" stroke-dasharray="1.6 1.4"/>
<line x1="1134.0" y1="174.3" x2="1197.0" y2="235.0" stroke="#8e5a50" stroke-width="0.8" stroke-dasharray="1.6 1.4"/>
<line x1="1155.0" y1="170.2" x2="1188.0" y2="231.0" stroke="#8e5a50" stroke-width="0.8" stroke-dasharray="1.6 1.4"/>
<line x1="1086.6" y1="203.0" x2="1176.6" y2="178.2" stroke="#8e5a50" stroke-width="0.7" stroke-dasharray="1.6 1.4" opacity="0.8"/>
<line x1="1123.2" y1="215.0" x2="1177.2" y2="190.4" stroke="#8e5a50" stroke-width="0.7" stroke-dasharray="1.6 1.4" opacity="0.8"/>
<line x1="1159.8" y1="227.0" x2="1177.8" y2="202.6" stroke="#8e5a50" stroke-width="0.7" stroke-dasharray="1.6 1.4" opacity="0.8"/>
<line x1="1196.4" y1="239.0" x2="1178.4" y2="214.8" stroke="#8e5a50" stroke-width="0.7" stroke-dasharray="1.6 1.4" opacity="0.8"/>
<ellipse cx="1142.4" cy="200.9" rx="1.8" ry="1" fill="#8a8a90"/>
<ellipse cx="1159.3" cy="203.3" rx="1.8" ry="1" fill="#8a8a90"/>
<ellipse cx="1170.9" cy="205.7" rx="1.8" ry="1" fill="#8a8a90"/>
<ellipse cx="1168.8" cy="214.8" rx="1.8" ry="1" fill="#8a8a90"/>
<ellipse cx="1178.1" cy="217.2" rx="1.8" ry="1" fill="#8a8a90"/>
<ellipse cx="1182.0" cy="219.6" rx="1.8" ry="1" fill="#8a8a90"/>
<ellipse cx="1154.1" cy="212.4" rx="1.8" ry="1" fill="#8a8a90"/>
<ellipse cx="1190.7" cy="228.7" rx="1.8" ry="1" fill="#8a8a90"/>
<ellipse cx="1192.4" cy="231.2" rx="1.8" ry="1" fill="#8a8a90"/>
<ellipse cx="1176.6" cy="209.3" rx="1.8" ry="1" fill="#8a8a90"/>
<ellipse cx="1120.0" cy="198.6" rx="1.8" ry="1" fill="#8a8a90"/>
<ellipse cx="1182.3" cy="223.3" rx="1.8" ry="1" fill="#8a8a90"/>
<line x1="1096" y1="195" x2="1144" y2="184.5" stroke="#1e1e1e" stroke-width="1.4"/>
<polygon points="1144.0,186.0 1176.0,166.5 1194.0,170.0 1193.0,188.0 1179.0,193.0 1178.0,203.0 1146.0,197.0" fill="#3e3e40"/>
<rect x="1147.0" y="183.0" width="2.4" height="9.0" fill="#cfcfcf"/>
<rect x="1153.5" y="180.8" width="2.4" height="10.0" fill="#cfcfcf"/>
<rect x="1160.0" y="178.6" width="2.4" height="11.0" fill="#cfcfcf"/>
<rect x="1166.5" y="176.4" width="2.4" height="12.0" fill="#cfcfcf"/>
<rect x="1173.0" y="174.2" width="2.4" height="13.0" fill="#cfcfcf"/>
<rect x="1179.5" y="172.0" width="2.4" height="14.0" fill="#cfcfcf"/>
<rect x="1186.0" y="169.8" width="2.4" height="15.0" fill="#cfcfcf"/>
<polygon points="1145.0,189.0 1177.0,196.0 1177.0,204.0 1145.0,197.0" fill="#f4eecb"/>
<polygon points="1176.0,161.0 1208.0,154.0 1213.0,157.0 1213.0,186.0 1190.0,191.0 1180.0,190.0 1178.0,166.0" fill="#e0744a" stroke="#5a2a18" stroke-width="0.7"/>
<polygon points="1199.0,167.0 1205.0,165.5 1205.0,183.0 1199.0,184.5" fill="#2a2a2a"/>
<polygon points="1212.0,158.0 1281.0,166.0 1299.0,166.0 1212.0,187.0" fill="#45474a"/>
<polygon points="1210.0,156.0 1282.0,164.5 1297.0,166.5 1212.0,168.0" fill="#c9cadf"/>
<line x1="1227.0" y1="158.8" x2="1227.0" y2="167.7" stroke="#8e5a50" stroke-width="0.6" stroke-dasharray="1.5 1.2"/>
<line x1="1242.0" y1="160.6" x2="1240.0" y2="167.4" stroke="#8e5a50" stroke-width="0.6" stroke-dasharray="1.5 1.2"/>
<line x1="1257.0" y1="162.4" x2="1253.0" y2="167.1" stroke="#8e5a50" stroke-width="0.6" stroke-dasharray="1.5 1.2"/>
<line x1="1272.0" y1="164.2" x2="1266.0" y2="166.8" stroke="#8e5a50" stroke-width="0.6" stroke-dasharray="1.5 1.2"/>
<rect x="1215.0" y="169.0" width="3" height="13.0" fill="#dcdcdc"/>
<rect x="1222.2" y="169.1" width="3" height="12.1" fill="#dcdcdc"/>
<rect x="1229.4" y="169.2" width="3" height="11.2" fill="#dcdcdc"/>
<rect x="1236.6" y="169.3" width="3" height="10.3" fill="#dcdcdc"/>
<rect x="1243.8" y="169.4" width="3" height="9.4" fill="#dcdcdc"/>
<rect x="1251.0" y="169.5" width="3" height="8.5" fill="#dcdcdc"/>
<rect x="1258.2" y="169.6" width="3" height="7.6" fill="#dcdcdc"/>
<rect x="1265.4" y="169.7" width="3" height="6.7" fill="#dcdcdc"/>
<rect x="1272.6" y="169.8" width="3" height="5.8" fill="#dcdcdc"/>
<polyline points="1210.0,168.0 1299.0,166.0" fill="none" stroke="#e07048" stroke-width="1.5"/>
<polyline points="1176.0,160.5 1208.0,153.5 1283.0,163.0 1307.0,155.5 1374.0,164.5" fill="none" stroke="#e97d4f" stroke-width="3.5"/>
<polygon points="1179.0,192.0 1262.0,212.0 1262.0,250.0 1179.0,227.0" fill="#de7246" stroke="#5a2a18" stroke-width="0.9"/>
<line x1="1180" y1="202.5" x2="1262" y2="223" stroke="#8a3a1e" stroke-width="0.9"/>
<polygon points="1182.0,222.0 1187.0,223.0 1187.0,232.0 1182.0,231.0" fill="#c9a090" stroke="#777" stroke-width="0.5"/>
<polygon points="1202.0,195.0 1300.0,168.0 1356.0,168.0 1262.0,210.0" fill="#c3c4db"/>
<polygon points="1181.0,191.0 1299.0,165.0 1301.0,171.5 1203.0,197.0" fill="#ea7c4e" stroke="#5a2a18" stroke-width="0.7"/>
<polygon points="1262.0,210.0 1373.0,165.0 1374.0,170.5 1262.0,216.0" fill="#f0905e" stroke="#5a2a18" stroke-width="0.7"/>
<polyline points="1181.0,191.0 1262.0,211.0" fill="none" stroke="#f0905e" stroke-width="2"/>
<polygon points="1296.0,166.0 1307.0,156.0 1374.0,165.0 1358.0,170.0" fill="#e8784c" stroke="#5a2a18" stroke-width="0.6"/>
<rect x="1240" y="196" width="1.6" height="8" fill="#888"/>
<polyline points="1041.5,208.8 1233.5,290.5 1378.0,201.4" fill="none" stroke="#2a2a2a" stroke-width="4.6"/>
<polyline points="1041.5,208.8 1233.5,290.5 1378.0,201.4" fill="none" stroke="#e2e2e2" stroke-width="3"/>
<polyline points="1043.5,225.0 1233.5,315.0 1376.0,216.8" fill="none" stroke="#2a2a2a" stroke-width="4.6"/>
<polyline points="1043.5,225.0 1233.5,315.0 1376.0,216.8" fill="none" stroke="#e2e2e2" stroke-width="3"/>
<polygon points="1249.0,297.0 1276.0,284.0 1278.0,290.0 1251.0,303.0" fill="#2a2a2a" stroke="#d0d0d0" stroke-width="0.8"/>
<polygon points="1343.0,238.0 1360.0,229.0 1362.0,234.0 1345.0,243.0" fill="#2a2a2a" stroke="#d0d0d0" stroke-width="0.8"/>
<polygon points="1062.0,237.0 1074.0,240.0 1073.0,243.5 1061.0,240.5" fill="#2a2a2a" stroke="#aaa" stroke-width="0.5"/>
<path d="M1212 212V206M1212 212L1208 214M1212 212L1216 213" stroke-width="0.8" fill="none" stroke="#00f"/></svg>
<!-- resize handle -->
<div class="a" style="left:652px;top:444px;width:2px;height:27px;background:#3a9ac0"></div>
<!-- bottom panel -->
<div class="a" style="left:667px;top:424px;width:1119px;height:379px;background:#fff;border-radius:4px 4px 0 0;overflow:hidden">
  <div class="a" style="left:0;top:0;width:1119px;height:37px;background:#535353"></div>
  <div class="a" style="left:560px;top:6px;width:42px;height:3px;background:#3a9cbd"></div>
  <div class="a" style="left:64px;top:37px;width:1055px;height:32px;background:#666"></div>
  <div class="a" style="left:0;top:69px;width:64px;height:64px;background:#ffa3a3"></div>
  <div class="a" style="left:0;top:100px;width:1119px;height:1px;background:#dcdcdc"></div>
  <div class="a" style="left:0;top:100px;width:64px;height:1px;background:#e08a8a"></div>
  <div class="a" style="left:64px;top:69px;width:1px;height:64px;background:#535353"></div>
  <div class="a" style="left:527px;top:37px;width:1px;height:96px;background:#535353"></div>
  <div class="a" style="left:789px;top:37px;width:1px;height:96px;background:#535353"></div>
  <div class="a" style="left:1066px;top:37px;width:1px;height:96px;background:#535353"></div>
</div>
<svg class="a" style="left:672px;top:436px" width="22" height="20" viewBox="672 436 22 20">
<path d="M674.9 441H688.8M674.9 445H688.8M674.9 449H684.6" stroke="#ececec" stroke-width="2"/><path d="M686 446.3L691 449.5L686 452.8Z" fill="#ececec"/>
</svg>
<div class="t" style="left:698.4px;top:437.9px;font-size:14px;color:#e8e8e8">Атрибутивная проверка</div>
<svg class="a" style="left:1690px;top:430px" width="90" height="30" viewBox="1690 430 90 30">
<g stroke="#ececec" stroke-width="1.8" fill="none"><path d="M1697 437.8H1711M1697 453.2H1711M1704 439.5V451.5"/><path d="M1701.5 442.3L1704 439.5L1706.5 442.3M1701.5 448.7L1704 451.5L1706.5 448.7"/>
<path d="M1734 436V440M1734 450V454"/></g>
<rect x="1727" y="443" width="14" height="4.2" fill="#ececec"/><rect x="1727.5" y="444.5" width="13" height="1.2" fill="#c4c4c4"/>
<path d="M1730.7 438.8H1737.3L1734 442Z" fill="#ececec"/><path d="M1730.5 451.6H1737.6L1734 447.9Z" fill="#ececec"/>
</svg>
<svg class="a" style="left:1752px;top:433px" width="24" height="24" viewBox="0 0 24 24">
<path transform="translate(12 12) scale(0.92) translate(-12 -12)" fill="#ececec" d="M19.14 12.94c.04-.3.06-.61.06-.94 0-.32-.02-.64-.07-.94l2.03-1.58a.49.49 0 0 0 .12-.61l-1.92-3.32a.488.488 0 0 0-.59-.22l-2.39.96c-.5-.38-1.03-.7-1.62-.94l-.36-2.54a.484.484 0 0 0-.48-.41h-3.84c-.24 0-.43.17-.47.41l-.36 2.54c-.59.24-1.13.57-1.62.94l-2.39-.96c-.22-.08-.47 0-.59.22L2.74 8.87c-.12.21-.08.47.12.61l2.03 1.58c-.05.3-.09.63-.09.94s.02.64.07.94l-2.03 1.58a.49.49 0 0 0-.12.61l1.92 3.32c.12.22.37.29.59.22l2.39-.96c.5.38 1.03.7 1.62.94l.36 2.54c.05.24.24.41.48.41h3.84c.24 0 .44-.17.47-.41l.36-2.54c.59-.24 1.13-.56 1.62-.94l2.39.96c.22.08.47 0 .59-.22l1.92-3.32c.12-.22.07-.47-.12-.61l-2.01-1.58zM12 15.6c-1.98 0-3.6-1.62-3.6-3.6s1.62-3.6 3.6-3.6 3.6 1.62 3.6 3.6-1.62 3.6-3.6 3.6z"/>
</svg>
<!-- checkboxes -->
<svg class="a" style="left:684px;top:466px" width="22" height="90" viewBox="684 466 22 90">
<rect x="688.8" y="470.6" width="12.4" height="12.8" rx="2" fill="none" stroke="#777" stroke-width="1.8"/>
<rect x="688.8" y="502.4" width="12.4" height="12.8" rx="2" fill="none" stroke="#6a4d4d" stroke-width="1.8"/>
<rect x="688.8" y="534.4" width="12.4" height="12.8" rx="2" fill="none" stroke="#6a4d4d" stroke-width="1.8"/>
</svg>
<div class="t" style="left:747.4px;top:471.3px;font-size:12px;font-weight:bold;letter-spacing:-0.54px;color:#e6e6e6">Правило</div>
<div class="t" style="left:1210.4px;top:471.3px;font-size:12px;font-weight:bold;letter-spacing:-0.34px;color:#e6e6e6">Статус</div>
<div class="t" style="left:1472.6px;top:471.3px;font-size:12px;font-weight:bold;letter-spacing:-0.29px;color:#e6e6e6">Всего элементов / Пройденных элементов</div>
<div class="a" style="left:1733px;top:461px;width:53px;height:32px;overflow:hidden"><div class="t" style="left:16.2px;top:10.3px;font-size:12px;font-weight:bold;letter-spacing:-0.29px;color:#e6e6e6">Всего элементов</div></div>
<svg class="a" style="left:755px;top:504px" width="14" height="44" viewBox="755 504 14 44">
<path d="M757.2 512L762 506.8L766.9 512Z" fill="#666"/><path d="M757.2 544.3L762 539.1L766.9 544.3Z" fill="#666"/>
</svg>
<div class="t" style="left:775.7px;top:501.1px;font-size:14px;font-weight:bold;letter-spacing:-0.48px;color:#1e1e1e">Правило: контроль атрибутов</div>
<div class="t" style="left:775.7px;top:534px;font-size:14px;font-weight:bold;letter-spacing:-0.48px;color:#1e1e1e">Правило: IFC-схема</div>
<div class="t" style="left:1210.4px;top:500.6px;font-size:14px;color:#222">Проверка не пройдена</div>
<div class="t" style="left:1210.4px;top:533.6px;font-size:14px;color:#222">Проверка не пройдена</div>
<div class="t" style="left:1472.5px;top:500.6px;font-size:14px;letter-spacing:0.38px;color:#222">1793/793</div>
<div class="t" style="left:1472.5px;top:533.6px;font-size:14px;letter-spacing:0.38px;color:#222">4/0</div>
<div class="a" style="left:1734px;top:493px;width:52px;height:64px;overflow:hidden">
<div class="t" style="left:15.3px;top:7.6px;font-size:14px;letter-spacing:0.38px;color:#222">1793/793</div>
<div class="t" style="left:15.3px;top:40.6px;font-size:14px;letter-spacing:0.38px;color:#222">4/0</div></div>
<!-- scrollbar -->
<div class="a" style="left:667px;top:803px;width:1119px;height:8px;background:#666;border-radius:0 0 3px 5px;overflow:hidden">
  <div class="a" style="left:0;top:0;width:800px;height:8px;background:#3a91b0"></div>
</div>

<!-- right sidebar -->
<div class="a" style="left:1794px;top:37px;width:36px;height:772px;background:#535353"></div>
<div class="a" style="left:1794px;top:128px;width:36px;height:2px;background:#3c3c3c"></div>
<div class="a" style="left:1794px;top:397.5px;width:36px;height:1.5px;background:#3c3c3c"></div>
<div class="a" style="left:1794px;top:446.5px;width:36px;height:1.5px;background:#3c3c3c"></div>
<div class="a" style="left:1794px;top:627.5px;width:36px;height:1.5px;background:#3c3c3c"></div>
<div class="a" style="left:1794px;top:720.5px;width:36px;height:1.5px;background:#3c3c3c"></div>
<div class="a" style="left:1796px;top:637px;width:32px;height:32px;background:#8a8a8a"></div>
<div class="a" style="left:1796px;top:681px;width:32px;height:32px;background:#8a8a8a"></div>
<svg class="a" style="left:1794px;top:37px" width="36" height="771" viewBox="1794 37 36 771">
<g stroke="#e6e6e6" fill="none" stroke-width="1.3">
<!-- cloud tree -->
<path d="M1808.5 66.5H1805.5A4.6 4.6 0 0 1 1803.5 57.8A5.5 5.5 0 0 1 1808 52.5A5.8 5.8 0 0 1 1818 52.8A5.5 5.5 0 0 1 1820.3 58A4.6 4.6 0 0 1 1818.5 66.5H1815.5"/>
<path d="M1812 55V72M1812 64L1808 60.5M1812 61.5L1815.5 58.5"/>
<!-- screen hex -->
<path d="M1808 109.5H1799.5V92.8H1822.5V100.5M1808 109.5V111.2H1806"/>
<path d="M1809.5 106.8V101.5H1814.6M1819.6 101.5H1824.6V106.8M1824.6 112.4V117.6H1819.6M1814.6 117.6H1809.5V112.4"/>
<!-- ruler -->
<rect x="1799.5" y="149" width="25.5" height="7.5" stroke-width="1.2"/>
<path d="M1802.5 156V152.5M1806 156V154M1809.5 156V152.5M1813 156V154M1816.5 156V152.5M1820 156V154" stroke-width="1"/>
<!-- plane -->
<path d="M1798.5 200.5L1805 194.5H1825.5L1819 200.5Z" stroke-width="1.2"/>
<!-- box -->
<path d="M1800.5 237H1816V252.5H1800.5ZM1808 231.5H1824V247H1816M1800.5 237L1808 231.5M1816 237L1824 231.5M1816 252.5L1824 247M1800.5 252.5L1808 247" stroke-width="1.1"/>
<!-- plan -->
<path d="M1801.5 275.8H1824.5V295.8H1798.5V279Z" stroke-width="1.2"/>
<path d="M1810.5 276.5V295M1799 284.5H1824" stroke-width="1.2" stroke-dasharray="2 1.5"/>
<path d="M1817 295V291.2H1824" stroke-width="1.2"/>
<!-- target -->
<circle cx="1811.6" cy="329.8" r="7.6" stroke-width="2"/>
<path d="M1811.6 320.5V322M1811.6 337.5V339M1802 329.8H1804M1819.3 329.8H1821" stroke-width="2"/>
<!-- flag -->
<circle cx="1811.9" cy="374.1" r="12.6" stroke-width="1.1"/>
<path d="M1806.3 380.5V367.8Q1809 366.5 1812 368Q1815.5 369.5 1819.8 368.2V375.5Q1815.5 376.8 1812 375.3Q1809 374 1806.3 375.3" stroke-width="1.2"/>
<!-- grid -->
<path d="M1797.3 427L1827 410.2M1797.3 436.9L1827 420.1M1798.2 421.4L1816.7 432.2M1806.8 415.4L1825.7 425.7" stroke-width="1.2"/>
<!-- dotted boxes -->
<rect x="1800.5" y="460" width="23" height="23.5" stroke-width="1.3" stroke-dasharray="2 1.6"/>
<rect x="1800.5" y="504.5" width="23" height="23" stroke-width="1.3" stroke-dasharray="2 1.6"/>
<rect x="1800.5" y="548.8" width="23" height="23" stroke-width="1.3" stroke-dasharray="2 1.6"/>
<path d="M1810 617.5H1800.5V592.5H1823.5V602" stroke-width="1.3" stroke-dasharray="2 1.6"/>
<!-- cube in dotted -->
<path d="M1812 465.5L1817.5 468.5V475L1812 478L1806.5 475V468.5ZM1806.5 468.5L1812 471.5L1817.5 468.5M1812 471.5V478" stroke-width="1.1"/>
</g>
<g fill="#e6e6e6">
<path d="M1799.3 158.8H1825.3V160.8H1799.3Z"/>
<path d="M1817.2 105.3L1821.3 107.6V112.4L1817.2 114.7L1813.1 112.4V107.6Z"/>
<path d="M1816.9 184V202L1807.3 212.3V191.6Z"/>
<path d="M1808.5 236.8L1813 233.5V248.5L1808.5 251.8Z"/>
<path d="M1799 295.8H1825.5V297H1799ZM1824.5 276H1825.8V297H1824.5Z"/>
<circle cx="1811.6" cy="329.8" r="3.9"/>
<text x="1798.3" y="419.5" font-family="Liberation Sans" font-size="6" font-weight="bold" text-anchor="middle">1</text>
<text x="1808.5" y="414.3" font-family="Liberation Sans" font-size="6" font-weight="bold" text-anchor="middle">2</text>
<path d="M1803.5 516A9 6.5 0 0 1 1820.5 516A9 6.5 0 0 1 1803.5 516Z"/>
<path d="M1803.5 560.3A9 6.5 0 0 1 1820.5 560.3A9 6.5 0 0 1 1803.5 560.3Z"/>
<rect x="1810.2" y="602" width="15.8" height="16.2"/>
</g>
<circle cx="1812" cy="516" r="2.6" fill="#535353"/><circle cx="1812" cy="516" r="1.4" fill="#e6e6e6"/>
<circle cx="1812" cy="560.3" r="2.6" fill="#535353"/><path d="M1805.5 553.5L1818.5 567" stroke="#535353" stroke-width="2.2"/><path d="M1805.5 552.3L1819 566.5" stroke="#e6e6e6" stroke-width="1"/>
<path d="M1814 606L1822.3 614.3M1822.3 606L1814 614.3" stroke="#535353" stroke-width="1.3"/>
<!-- cube button -->
<path d="M1801 644.2L1812 641.8L1823 644.2L1812 648.2Z" fill="#6e6e6e" stroke="#e0e0e0" stroke-width="1.2" stroke-linejoin="round"/>
<path d="M1801 644.2L1812 648.2V665L1802.3 657.7Z" fill="#e0e0e0" stroke="#e0e0e0" stroke-width="1.2" stroke-linejoin="round"/>
<path d="M1823 644.2L1812 648.2V665L1822 657.7Z" fill="#8a8a8a" stroke="#e0e0e0" stroke-width="1.2" stroke-linejoin="round"/>
<!-- orbit -->
<g stroke="#e6e6e6" fill="none" stroke-width="2.2"><ellipse cx="1811.9" cy="697" rx="10.4" ry="5.6"/><ellipse cx="1811.9" cy="697" rx="5.2" ry="10.6"/></g>
<path d="M1811.9 697.5V693M1811.9 697.5L1808.8 700.3M1811.9 697.5L1815 700.3" stroke="#e6e6e6" stroke-width="0.9"/>
<path d="M1796.3 802.8V807.2H1800.3Z" fill="#f0f0f0"/>
</svg>

<!-- help -->
<div class="a" style="left:14px;top:778px;width:25px;height:25px;border-radius:50%;background:#535353"></div>
<div class="t" style="left:20.5px;top:782.5px;width:12px;text-align:center;font-size:15px;font-weight:bold;color:#f0f0f0">?</div>
<!-- arrows -->
<svg class="a" style="left:0;top:0" width="1835" height="814" viewBox="0 0 1835 814">
<defs><filter id="sh" x="-20%" y="-20%" width="140%" height="140%"><feDropShadow dx="3" dy="4" stdDeviation="2.2" flood-color="#000" flood-opacity="0.5"/></filter></defs>
<g filter="url(#sh)">
<path d="M594.5 232.5L487.8 309.5L657 463" stroke="#c00000" stroke-width="3" fill="none" stroke-linejoin="miter"/>
<path d="M606.2 224.4L590 227.5L598.6 239.2Z" fill="#c00000"/>
<path d="M666.5 471.8L660.7 456.1L650.9 466.9Z" fill="#c00000"/>
</g>
</svg>

</body></html>
